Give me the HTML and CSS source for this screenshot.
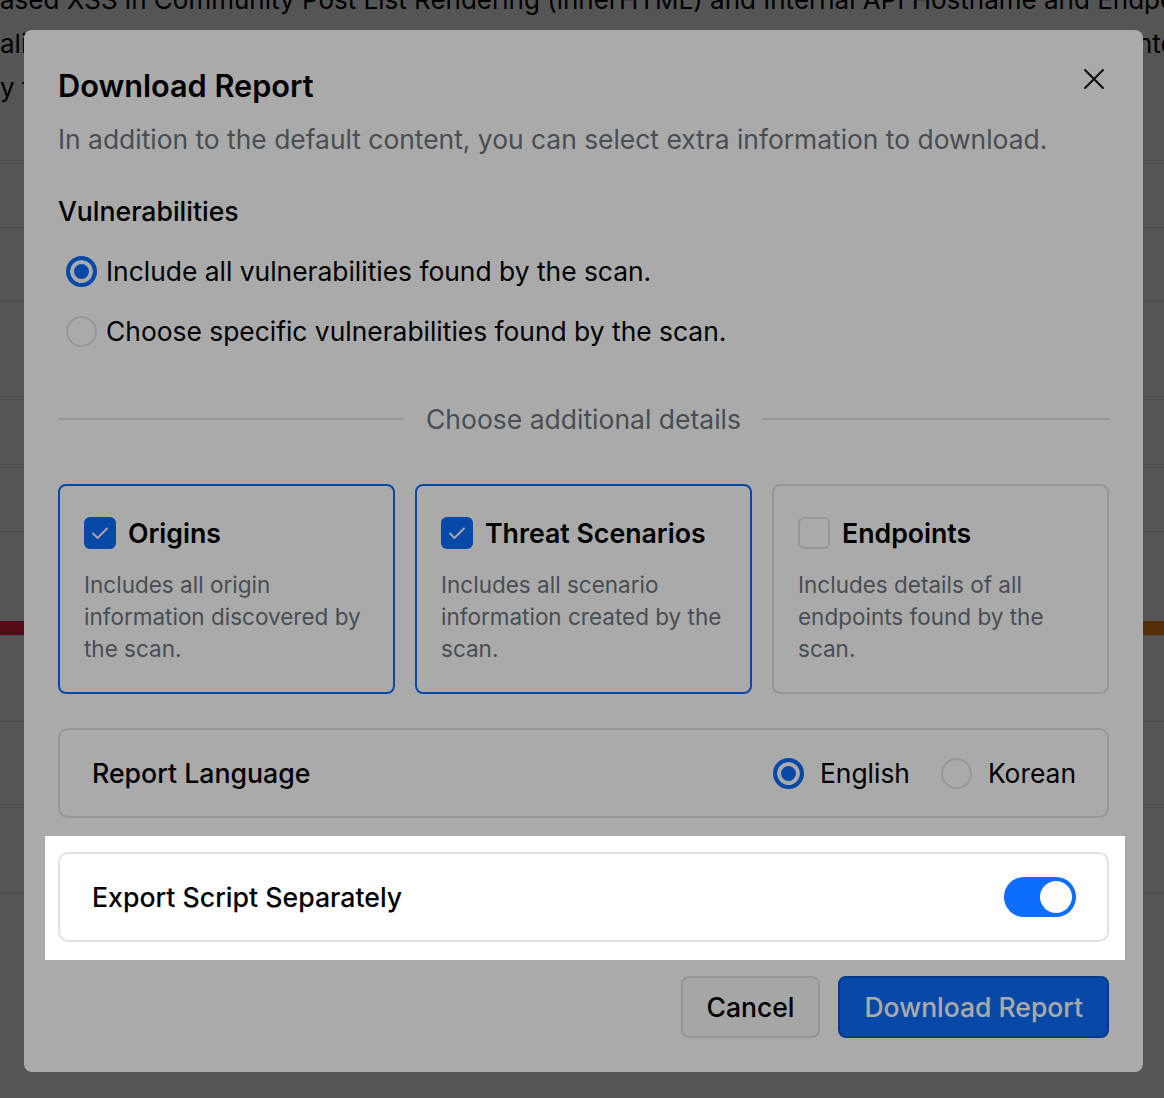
FILE: index.html
```html
<!DOCTYPE html>
<html lang="en">
<head>
    <meta charset="UTF-8">
    <title>Download Report</title>
    <link rel="stylesheet" href="styles.css">
</head>
<body>
<div class="page">
    <h2 class="page-title">ased XSS in Community Post List Rendering (innerHTML) and Internal API Hostname and Endpoint Exposure</h2>
    <p class="page-line">alidated post titles are written into the list with innerHTML, and the bundled config leaks the internal hostname</p>
    <p class="page-line">y fix: escape user content before rendering</p>
    <div class="rows">
        <div class="row"></div>
        <div class="row r74"></div>
        <div class="row r98"></div>
        <div class="row r65"></div>
        <div class="row"></div>
        <div class="row r90"></div>
        <div class="sev-bar"></div>
        <div class="row r86"></div>
        <div class="row r86"></div>
        <div class="row r86"></div>
        <div class="row r86"></div>
    </div>
</div>

<div class="backdrop">
    <div class="modal">
        <div class="modal-head">
            <h1 class="modal-title">Download Report</h1>
            <button class="close" type="button" aria-label="Close">
                <svg width="22" height="22" viewBox="0 0 22 22"><path d="M2 2L20 20M20 2L2 20" stroke="#111" stroke-width="2" stroke-linecap="round"/></svg>
            </button>
        </div>
        <p class="modal-desc">In addition to the default content, you can select extra information to download.</p>

        <div class="section-title">Vulnerabilities</div>
        <div class="radio-list">
            <label class="radio"><span class="radio-dot on"></span>Include all vulnerabilities found by the scan.</label>
            <label class="radio"><span class="radio-dot"></span>Choose specific vulnerabilities found by the scan.</label>
        </div>

        <div class="divider">Choose additional details</div>

        <div class="options">
            <div class="opt on">
                <div class="opt-head">
                    <span class="check on"><svg width="32" height="32" viewBox="0 0 32 32"><path d="M9 16.5l4.5 4.5L23 11.5" fill="none" stroke="#fff" stroke-width="1.8" stroke-linecap="round" stroke-linejoin="round"/></svg></span>
                    <span class="opt-title">Origins</span>
                </div>
                <p class="opt-desc">Includes all origin information discovered by the scan.</p>
            </div>
            <div class="opt on">
                <div class="opt-head">
                    <span class="check on"><svg width="32" height="32" viewBox="0 0 32 32"><path d="M9 16.5l4.5 4.5L23 11.5" fill="none" stroke="#fff" stroke-width="1.8" stroke-linecap="round" stroke-linejoin="round"/></svg></span>
                    <span class="opt-title">Threat Scenarios</span>
                </div>
                <p class="opt-desc">Includes all scenario information created by the scan.</p>
            </div>
            <div class="opt">
                <div class="opt-head">
                    <span class="check"></span>
                    <span class="opt-title">Endpoints</span>
                </div>
                <p class="opt-desc">Includes details of all endpoints found by the scan.</p>
            </div>
        </div>

        <div class="setting">
            <span class="setting-label">Report Language</span>
            <div class="lang">
                <label class="radio"><span class="radio-dot on"></span>English</label>
                <label class="radio"><span class="radio-dot"></span>Korean</label>
            </div>
        </div>

        <div class="setting export">
            <span class="setting-label">Export Script Separately</span>
            <span class="switch on"><span class="knob"></span></span>
            <div class="spot"></div>
        </div>

        <div class="modal-foot">
            <button class="btn btn-light" type="button">Cancel</button>
            <button class="btn btn-primary" type="button">Download Report</button>
        </div>
    </div>
</div>
</body>
</html>
```

FILE: styles.css
```css
*{box-sizing:border-box;}
html,body{margin:0;height:100%;}
body{font-family:Inter,"Noto Sans",sans-serif;background:#fff;color:#000;overflow:hidden;}

/* page behind the dialog */
.page{margin-top:-22px;white-space:nowrap;}
.page-title{font-size:26px;font-weight:400;line-height:44px;margin:0;}
.page-line{font-size:26px;line-height:44px;margin:0;}
.rows{margin-top:50px;}
.row{height:67px;border-top:1px solid #dee2e6;}
.row.r74{height:74px;}
.row.r98{height:98px;}
.row.r65{height:65px;}
.row.r90{height:90px;}
.row.r86{height:86px;}
.sev-bar{height:14px;background:linear-gradient(90deg,#ff2040,#ff6a3a 50%,#ff8a20);}

/* dialog */
.backdrop{position:fixed;inset:0;background:rgba(0,0,0,.5);}
.modal{width:1119px;margin:30px 0 0 24px;background:#fff;border-radius:8px;padding:38px 34px 34px;}
.modal-head{display:flex;justify-content:space-between;align-items:flex-start;}
.modal-title{font-size:30.7px;font-weight:600;line-height:36px;margin:0;color:#000;}
.close{width:32px;height:32px;border:0;background:none;padding:0;margin:-5px -1px 0 0;display:flex;align-items:center;justify-content:center;cursor:pointer;}
.modal-desc{font-size:26.4px;line-height:36px;color:#6c757d;margin:17px 0 0;}

.section-title{font-size:26.6px;font-weight:500;line-height:36px;margin-top:36px;}
.radio-list{margin-top:24px;padding-left:8px;display:flex;flex-direction:column;gap:24px;}
.radio{display:flex;align-items:center;gap:9px;font-size:26.4px;line-height:36px;color:#000;cursor:pointer;}
.radio-dot{width:31px;height:31px;border-radius:50%;border:2px solid #e3e3e3;background:#fff;flex:none;}
.radio-dot.on{border:4px solid #0d6efd;background:#0d6efd;box-shadow:inset 0 0 0 4px #fff;}

.divider{display:flex;align-items:center;gap:22px;margin-top:52px;color:#6c757d;font-size:26.5px;line-height:36px;}
.divider::before,.divider::after{content:"";flex:1;height:2px;background:#dee2e6;}

.options{display:grid;grid-template-columns:repeat(3,1fr);gap:20px;margin-top:47px;}
.opt{height:210px;border:2px solid #dee2e6;border-radius:8px;padding:29px 18px 0 24px;}
.opt.on{border-color:#0d6efd;}
.opt-head{display:flex;align-items:center;gap:12px;height:36px;}
.check{width:32px;height:32px;border-radius:6px;border:2px solid #dee2e6;background:#fff;flex:none;}
.check.on{border:0;background:#0d6efd;}
.check svg{display:block;}
.opt-title{font-size:26.7px;font-weight:600;}
.opt-desc{font-size:22.5px;line-height:32px;color:#6c757d;margin:18px 0 0;}

.setting{display:flex;align-items:center;justify-content:space-between;height:90px;padding:0 31px 0 32px;border:2px solid #dee2e6;border-radius:10px;margin-top:34px;background:#fff;}
.setting-label{font-size:26.7px;font-weight:500;}
.lang{display:flex;gap:31px;}
.lang .radio{gap:16px;}
.export{position:relative;}
.switch{width:72px;height:40px;border-radius:20px;background:#0d6efd;display:flex;align-items:center;justify-content:flex-end;padding:0 4px;}
.knob{width:32px;height:32px;border-radius:50%;background:#fff;}

/* tour highlight */
.spot{position:absolute;top:-18px;left:-15px;right:-18px;bottom:-20px;box-shadow:0 0 0 4000px rgba(0,0,0,.333);pointer-events:none;}

.modal-foot{display:flex;justify-content:flex-end;gap:18px;margin-top:34px;}
.btn{height:62px;border-radius:8px;font-family:inherit;font-size:26.5px;font-weight:500;padding:0 24px;border:2px solid;cursor:pointer;}
.btn-light{background:#f8f9fa;border-color:#dee2e6;color:#000;}
.btn-primary{background:#0d6efd;border-color:#0a58ca;color:#fff;}
```
